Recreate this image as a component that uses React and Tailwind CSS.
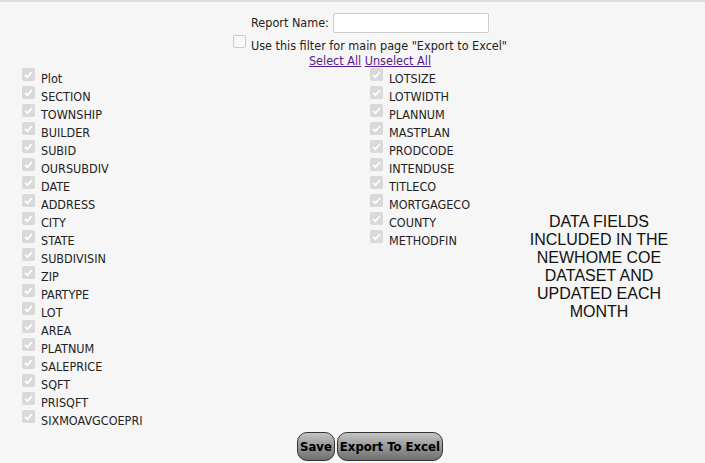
import React from "react"

const left = [
  "Plot", "SECTION", "TOWNSHIP", "BUILDER", "SUBID", "OURSUBDIV", "DATE",
  "ADDRESS", "CITY", "STATE", "SUBDIVISIN", "ZIP", "PARTYPE", "LOT", "AREA",
  "PLATNUM", "SALEPRICE", "SQFT", "PRISQFT", "SIXMOAVGCOEPRI",
]

const right = [
  "LOTSIZE", "LOTWIDTH", "PLANNUM", "MASTPLAN", "PRODCODE", "INTENDUSE",
  "TITLECO", "MORTGAGECO", "COUNTY", "METHODFIN",
]

const Check = ({ checked = true }) => (
  <span className="w-[13px] h-[13px] rounded-[2px] bg-[#d9d9d9] flex items-center justify-center shrink-0">
    {checked && (
      <svg width="11" height="11" viewBox="0 0 11 11">
        <path d="M2 5.8 L4.4 8.2 L9 3" fill="none" stroke="#fff" strokeWidth="1.8" />
      </svg>
    )}
  </span>
)

const Field = ({ name }) => (
  <div className="flex items-start h-[18px]">
    <Check />
    <span className="ml-[6px] mt-[3px] leading-[15px]">{name}</span>
  </div>
)

const Btn = ({ children }) => (
  <button className="h-[29px] px-[2px] rounded-[10px] border border-[#333] bg-gradient-to-b from-[#c4c4c4] to-[#6f6f6f] font-bold text-[13px] text-black">
    {children}
  </button>
)

const App = () => {
  return (
    <div
      className="min-h-screen bg-[#f6f6f6] border-t-2 border-[#dedede] text-[12.5px] text-[#222]"
      style={{ fontFamily: '"DejaVu Sans Condensed", Tahoma, "Noto Sans", sans-serif' }}
    >
      <div className="flex flex-col items-center ml-[35px] pt-[11px]">
        <div className="flex items-center h-[20px]">
          <span className="mr-[4px]">Report Name:</span>
          <input className="w-[156px] h-[20px] bg-white border border-[#ccc] rounded-[2px]" />
        </div>
        <div className="flex items-start mt-[2px] h-[18px]">
          <span className="w-[13px] h-[13px] rounded-[2px] border border-[#ccc] bg-[#f8f8f8]" />
          <span className="ml-[5px] mt-[3px] leading-[15px]">Use this filter for main page "Export to Excel"</span>
        </div>
        <div className="leading-[15px]">
          <a href="#" className="text-[#551a8b] underline">Select All</a>{" "}
          <a href="#" className="text-[#551a8b] underline">Unselect All</a>
        </div>
      </div>

      <div className="flex pl-[22px]">
        <div className="w-[348px] flex flex-col">
          {left.map((f) => (
            <Field key={f} name={f} />
          ))}
        </div>
        <div className="w-[123px] flex flex-col">
          {right.map((f) => (
            <Field key={f} name={f} />
          ))}
        </div>
        <div
          className="flex-1 text-center text-[16px] leading-[18px] text-[#111] pt-[145px]"
          style={{ fontFamily: '"Liberation Sans", Arial, sans-serif' }}
        >
          DATA FIELDS
          <br />
          INCLUDED IN THE
          <br />
          NEWHOME COE
          <br />
          DATASET AND
          <br />
          UPDATED EACH
          <br />
          MONTH
        </div>
      </div>

      <div className="flex justify-center gap-[2px] ml-[35px] mt-[4px]">
        <Btn>Save</Btn>
        <Btn>Export To Excel</Btn>
      </div>
    </div>
  )
}

export default App
